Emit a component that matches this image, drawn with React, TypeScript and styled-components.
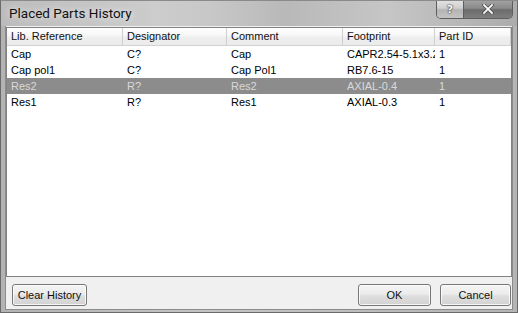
import React from "react";
import styled, { createGlobalStyle, css } from "styled-components";

const Global = createGlobalStyle`
  html, body { margin: 0; padding: 0; background: #ffffff; }
  * { box-sizing: border-box; }
`;

const Window = styled.div`
  width: 518px;
  height: 313px;
  display: flex;
  flex-direction: column;
  border: 1px solid #6a6a6a;
  border-top-color: #8a8a8a;
  background: linear-gradient(90deg, #b3b3b3 0%, #c4c4c4 40%, #bdbdbd 70%, #b5b5b5 100%);
  padding: 0 4px 2px 4px;
  font-family: "Liberation Sans", Arial, sans-serif;
  overflow: hidden;
`;

const TitleBar = styled.div`
  height: 25px;
  flex: none;
  display: flex;
  align-items: flex-start;
  background: linear-gradient(
    90deg,
    rgba(255, 255, 255, 0.12) 0%,
    rgba(255, 255, 255, 0.2) 30%,
    rgba(0, 0, 0, 0.04) 55%,
    rgba(255, 255, 255, 0.15) 75%,
    rgba(0, 0, 0, 0.05) 100%
  );
  margin: 0 -4px;
  padding: 0 4px 0 8px;
`;

const Title = styled.div`
  font-family: Roboto, "Open Sans", sans-serif;
  font-size: 13.5px;
  color: #111;
  line-height: 25px;
  flex: 1;
  text-shadow: 0 0 6px rgba(255, 255, 255, 0.9);
`;

const Caption = styled.div`
  display: flex;
  margin-top: -1px;
  border: 1px solid #5e5e5e;
  border-top: none;
  border-radius: 0 0 5px 5px;
  overflow: hidden;
`;

const CapBtn = styled.div<{ $w: number; $close?: boolean }>`
  width: ${(p) => p.$w}px;
  height: 18px;
  display: flex;
  align-items: center;
  justify-content: center;
  font-family: "DejaVu Sans", sans-serif;
  font-weight: bold;
  font-size: 11px;
  color: #f4f4f4;
  text-shadow: 0 0 2px #333, 0 0 1px #333;
  ${(p) =>
    p.$close
      ? css`
          background: linear-gradient(180deg, #a4a4a4 0%, #8a8a8a 45%, #6c6c6c 55%, #7e7e7e 100%);
        `
      : css`
          background: linear-gradient(180deg, #e4e4e4 0%, #cfcfcf 45%, #b4b4b4 55%, #c4c4c4 100%);
          border-right: 1px solid #5e5e5e;
        `}
`;

const Client = styled.div`
  flex: 1;
  display: flex;
  flex-direction: column;
  background: #f0f0f0;
  border: 1px solid #8c8c8c;
  border-top: none;
`;

const Grid = styled.div`
  margin-top: 1px;
  height: 250px;
  border: 1px solid #828282;
  background: #ffffff;
  display: grid;
  grid-template-columns: 116px 104px 116px 92px 1fr;
  grid-template-rows: 18px;
  grid-auto-rows: 16px;
  align-content: start;
  font-size: 11px;
  color: #000;
`;

const HeaderCell = styled.div`
  background: linear-gradient(180deg, #ffffff 0%, #f6f6f6 45%, #eeeeee 55%, #ebebeb 100%);
  border-right: 1px solid #cfcfcf;
  border-bottom: 1px solid #d2d2d2;
  padding: 0 4px;
  line-height: 17px;
  white-space: nowrap;
  overflow: hidden;
  color: #111;
  &:last-child {
    border-right: none;
  }
`;

const Cell = styled.div<{ $sel?: boolean }>`
  padding: 0 3px 0 4px;
  line-height: 16px;
  white-space: nowrap;
  overflow: hidden;
  background: ${(p) => (p.$sel ? "#8c8c8c" : "transparent")};
  color: ${(p) => (p.$sel ? "#d9d9d9" : "#000")};
`;

const Footer = styled.div`
  flex: 1;
  display: flex;
  align-items: flex-start;
  padding: 7px 1px 0 6px;
  gap: 9px;
`;

const Button = styled.div<{ $w: number }>`
  width: ${(p) => p.$w}px;
  height: 22px;
  border: 1px solid #777777;
  border-radius: 3px;
  background: linear-gradient(180deg, #f4f4f4 0%, #ececec 45%, #dedede 55%, #d2d2d2 100%);
  box-shadow: inset 0 0 0 1px rgba(255, 255, 255, 0.8);
  display: flex;
  align-items: center;
  justify-content: center;
  font-size: 11px;
  color: #111;
`;

const Spacer = styled.div`
  flex: 1;
`;

const headers = ["Lib. Reference", "Designator", "Comment", "Footprint", "Part ID"];
const rows = [
  ["Cap", "C?", "Cap", "CAPR2.54-5.1x3.2", "1"],
  ["Cap pol1", "C?", "Cap Pol1", "RB7.6-15", "1"],
  ["Res2", "R?", "Res2", "AXIAL-0.4", "1"],
  ["Res1", "R?", "Res1", "AXIAL-0.3", "1"],
];
const selected = 2;

export default function App() {
  return (
    <>
      <Global />
      <Window>
        <TitleBar>
          <Title>Placed Parts History</Title>
          <Caption>
            <CapBtn $w={27}>?</CapBtn>
            <CapBtn $w={48} $close>
              <svg width="12" height="10" viewBox="0 0 12 10">
                <path d="M2 1 L10 9 M10 1 L2 9" stroke="#444" strokeWidth="3.2" strokeLinecap="square" />
                <path d="M2 1 L10 9 M10 1 L2 9" stroke="#fafafa" strokeWidth="1.8" strokeLinecap="square" />
              </svg>
            </CapBtn>
          </Caption>
        </TitleBar>
        <Client>
          <Grid>
            {headers.map((h) => (
              <HeaderCell key={h}>{h}</HeaderCell>
            ))}
            {rows.map((r, i) =>
              r.map((c, j) => (
                <Cell key={`${i}-${j}`} $sel={i === selected}>
                  {c}
                </Cell>
              ))
            )}
          </Grid>
          <Footer>
            <Button $w={75}>Clear History</Button>
            <Spacer />
            <Button $w={73}>OK</Button>
            <Button $w={71}>Cancel</Button>
          </Footer>
        </Client>
      </Window>
    </>
  );
}
